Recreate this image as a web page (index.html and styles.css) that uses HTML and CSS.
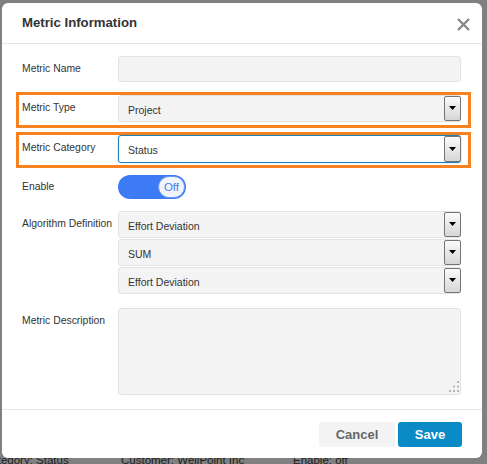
FILE: index.html
```html
<!DOCTYPE html>
<html>
<head>
<meta charset="utf-8">
<link rel="stylesheet" href="styles.css">
</head>
<body>
<div class="page">
  <div class="bg-strip">
    <span class="bg-item bg-cat">Category: Status</span>
    <span class="bg-item bg-cust">Customer: WellPoint Inc</span>
    <span class="bg-item bg-en">Enable: off</span>
  </div>

  <div class="modal">
    <div class="modal-header">
      <div class="modal-title">Metric Information</div>
      <svg class="close" width="13" height="13" viewBox="0 0 13 13"><path d="M1 1 L12 12 M12 1 L1 12" stroke="#878787" stroke-width="2.4" fill="none"/></svg>
    </div>

    <div class="modal-body">
      <div class="row row-name">
        <div class="label">Metric Name</div>
        <div class="control"><div class="input"></div></div>
      </div>

      <div class="row hl hl-type">
        <div class="label">Metric Type</div>
        <div class="control">
          <div class="select"><span class="val">Project</span><span class="caret"><svg width="7" height="4" viewBox="0 0 7 4"><path d="M0 0 H7 L3.5 4 Z" fill="#000"/></svg></span></div>
        </div>
      </div>

      <div class="row hl hl-cat">
        <div class="label">Metric Category</div>
        <div class="control">
          <div class="select select-focus"><span class="val">Status</span><span class="caret"><svg width="7" height="4" viewBox="0 0 7 4"><path d="M0 0 H7 L3.5 4 Z" fill="#000"/></svg></span></div>
        </div>
      </div>

      <div class="row row-enable">
        <div class="label label-mid">Enable</div>
        <div class="control">
          <div class="toggle"><span class="knob">Off</span></div>
        </div>
      </div>

      <div class="row row-algo">
        <div class="label">Algorithm Definition</div>
        <div class="control stack">
          <div class="select"><span class="val">Effort Deviation</span><span class="caret"><svg width="7" height="4" viewBox="0 0 7 4"><path d="M0 0 H7 L3.5 4 Z" fill="#000"/></svg></span></div>
          <div class="select"><span class="val">SUM</span><span class="caret"><svg width="7" height="4" viewBox="0 0 7 4"><path d="M0 0 H7 L3.5 4 Z" fill="#000"/></svg></span></div>
          <div class="select"><span class="val">Effort Deviation</span><span class="caret"><svg width="7" height="4" viewBox="0 0 7 4"><path d="M0 0 H7 L3.5 4 Z" fill="#000"/></svg></span></div>
        </div>
      </div>

      <div class="row row-desc">
        <div class="label">Metric Description</div>
        <div class="control">
          <div class="textarea">
            <svg class="grip" width="12" height="11" viewBox="0 0 12 11">
              <rect x="10" y="0" width="2" height="2" fill="#b5b5b5"/>
              <rect x="6" y="4.5" width="2" height="2" fill="#b5b5b5"/>
              <rect x="10" y="4.5" width="2" height="2" fill="#b5b5b5"/>
              <rect x="2" y="9" width="2" height="2" fill="#b5b5b5"/>
              <rect x="6" y="9" width="2" height="2" fill="#b5b5b5"/>
              <rect x="10" y="9" width="2" height="2" fill="#b5b5b5"/>
            </svg>
          </div>
        </div>
      </div>
    </div>

    <div class="modal-footer">
      <button class="btn btn-cancel">Cancel</button>
      <button class="btn btn-save">Save</button>
    </div>
  </div>
</div>
</body>
</html>
```

FILE: styles.css
```css
html, body {
  margin: 0;
  padding: 0;
}
body {
  background: #808080;
  font-family: "Liberation Sans", Arial, sans-serif;
}
.page {
  position: relative;
  width: 487px;
  height: 464px;
  overflow: hidden;
  background: #808080;
}
.bg-strip {
  padding-top: 453px;
  display: flex;
  font-size: 11.5px;
  line-height: 14px;
  color: #1e1e1e;
  white-space: nowrap;
}
.bg-cat { margin-left: -17px; width: 138px; }
.bg-cust { width: 172px; }

.modal {
  position: absolute;
  left: 2px;
  top: 3px;
  width: 480px;
  height: 455px;
  background: #fff;
  border-radius: 6px;
  display: flex;
  flex-direction: column;
  box-sizing: border-box;
}
.modal-header {
  height: 40px;
  border-bottom: 1px solid #e5e5e5;
  display: flex;
  align-items: center;
  justify-content: space-between;
  padding: 0 12px 0 20px;
  flex: none;
}
.modal-title {
  font-size: 13.2px;
  font-weight: bold;
  color: #333;
  padding-bottom: 1px;
}
.close { display: block; margin-top: 2px; }

.modal-body {
  padding: 12px 21px 14px 20px;
  flex: none;
}
.row {
  display: flex;
  align-items: flex-start;
}
.label {
  width: 96px;
  flex: none;
  font-size: 10.4px;
  line-height: 14px;
  color: #333;
  padding-top: 6px;
  white-space: nowrap;
}
.control {
  flex: 1;
  min-width: 0;
}
.input {
  height: 26px;
  box-sizing: border-box;
  border: 1px solid #e3e3e3;
  border-radius: 3px;
  background: #f4f4f4;
}
.hl {
  border: 3px solid #f7801f;
  margin-left: -6px;
  margin-right: -10px;
  padding: 0 7px 3px 3px;
}
.hl-type { margin-top: 10px; }
.hl-cat { margin-top: 4px; padding-bottom: 2px; }
.select {
  height: 27px;
  box-sizing: border-box;
  border: 1px solid #e3e3e3;
  border-radius: 3px;
  background: #f4f4f4;
  display: flex;
  align-items: center;
  font-size: 10.5px;
  color: #333;
}
.select .val {
  padding-left: 9px;
  padding-top: 2px;
  flex: 1;
}
.caret {
  width: 17px;
  height: 100%;
  box-sizing: border-box;
  border: 1px solid #757575;
  border-radius: 2px;
  background: linear-gradient(#fbfbfb, #d6d6d6);
  display: flex;
  align-items: center;
  justify-content: center;
  margin-right: -1px;
  padding-bottom: 1px;
}
.caret svg { display: block; }
.select-focus {
  height: 28px;
  background: #fff;
  border-color: #1e80b6;
  box-shadow: 0 0 2px rgba(30, 128, 182, 0.35);
}
.row-enable { margin-top: 7px; }
.label-mid { padding-top: 5px; }
.toggle {
  width: 68px;
  height: 24px;
  border-radius: 12px;
  background: #3d7bf5;
  display: flex;
  align-items: center;
  justify-content: flex-end;
  box-sizing: border-box;
  padding-right: 1px;
}
.knob {
  width: 27px;
  height: 22px;
  box-sizing: border-box;
  border-radius: 11px;
  background: #f1f4fb;
  border: 1px solid #6b98f3;
  font-size: 11.5px;
  color: #4b7fe6;
  display: flex;
  align-items: center;
  justify-content: center;
}
.row-algo { margin-top: 12px; }
.stack {
  display: flex;
  flex-direction: column;
  gap: 1px;
}
.row-desc { margin-top: 14px; }
.textarea {
  height: 87px;
  box-sizing: border-box;
  border: 1px solid #e3e3e3;
  border-radius: 3px;
  background: #f4f4f4;
  display: flex;
  align-items: flex-end;
  justify-content: flex-end;
  padding: 0 1px 2px 0;
}
.grip { display: block; }

.modal-footer {
  border-top: 1px solid #e5e5e5;
  padding: 12px 20px 0 0;
  display: flex;
  justify-content: flex-end;
  gap: 3px;
}
.btn {
  height: 25px;
  border: none;
  border-radius: 3px;
  font-family: "Liberation Sans", Arial, sans-serif;
  font-size: 13px;
  font-weight: bold;
  padding: 0;
  margin: 0;
}
.btn-cancel {
  width: 76px;
  background: #f3f3f3;
  color: #666;
}
.btn-save {
  width: 64px;
  background: #0a8bc6;
  color: #fff;
}
```
